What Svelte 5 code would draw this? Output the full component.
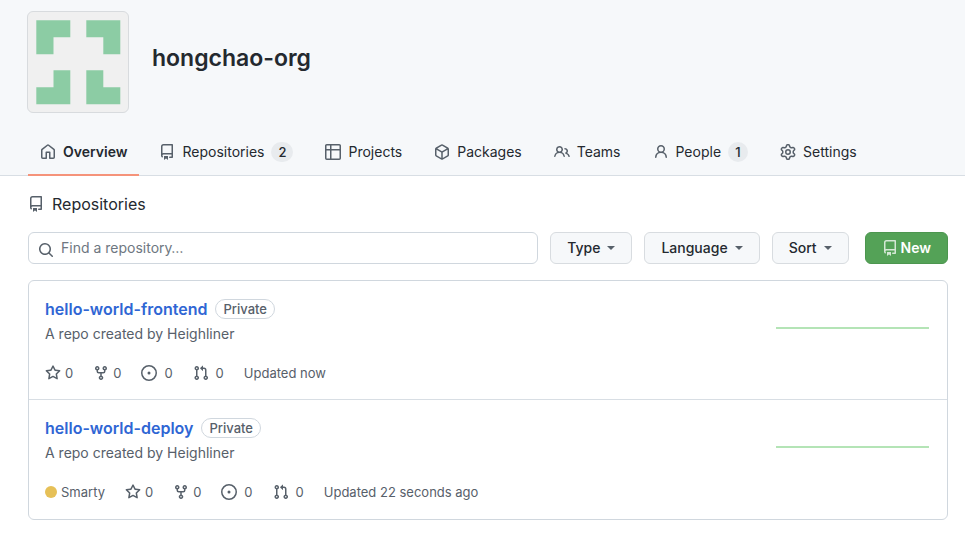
<script>
  const icons = {
    home: 'M8.156 1.835a.25.25 0 00-.312 0l-5.25 4.2a.25.25 0 00-.094.196v7.019c0 .138.112.25.25.25H5.5V8.25a.75.75 0 01.75-.75h3.5a.75.75 0 01.75.75v5.25h2.75a.25.25 0 00.25-.25V6.23a.25.25 0 00-.094-.195l-5.25-4.2zM6.906.664a1.75 1.75 0 012.187 0l5.25 4.2c.415.332.657.835.657 1.367v7.019A1.75 1.75 0 0113.25 15h-3.5a.75.75 0 01-.75-.75V9H7v5.25a.75.75 0 01-.75.75h-3.5A1.75 1.75 0 011 13.25V6.23c0-.531.242-1.034.657-1.366l5.25-4.2h-.001z',
    repo: 'M2 2.5A2.5 2.5 0 014.5 0h8.75a.75.75 0 01.75.75v12.5a.75.75 0 01-.75.75h-2.5a.75.75 0 110-1.5h1.75v-2h-8a1 1 0 00-.714 1.7.75.75 0 01-1.072 1.05A2.495 2.495 0 012 11.5v-9zm10.5-1V9h-8c-.356 0-.694.074-1 .208V2.5a1 1 0 011-1h8zM5 12.25v3.25a.25.25 0 00.4.2l1.45-1.087a.25.25 0 01.3 0L8.6 15.7a.25.25 0 00.4-.2v-3.25a.25.25 0 00-.25-.25h-3.5a.25.25 0 00-.25.25z',
    table: 'M0 1.75C0 .784.784 0 1.75 0h12.5C15.216 0 16 .784 16 1.75v12.5A1.75 1.75 0 0 1 14.25 16H1.75A1.75 1.75 0 0 1 0 14.25ZM6.5 6.5v8h7.75a.25.25 0 0 0 .25-.25V6.5Zm8-1.5V1.75a.25.25 0 0 0-.25-.25H6.5V5Zm-13 1.5v7.75c0 .138.112.25.25.25H5v-8ZM5 5V1.5H1.75a.25.25 0 0 0-.25.25V5Z',
    package: 'M8.878.392a1.75 1.75 0 00-1.756 0l-5.25 3.045A1.75 1.75 0 001 4.951v6.098c0 .624.332 1.2.872 1.514l5.25 3.045a1.75 1.75 0 001.756 0l5.25-3.045c.54-.313.872-.89.872-1.514V4.951c0-.624-.332-1.2-.872-1.514L8.878.392zM7.875 1.69a.25.25 0 01.25 0l4.63 2.685L8 7.133 3.245 4.375l4.63-2.685zM2.5 5.677v5.372c0 .09.047.171.125.216l4.625 2.683V8.432L2.5 5.677zm6.25 8.271l4.625-2.683a.25.25 0 00.125-.216V5.677L8.75 8.432v5.516z',
    people: 'M5.5 3.5a2 2 0 100 4 2 2 0 000-4zM2 5.5a3.5 3.5 0 115.898 2.549 5.507 5.507 0 013.034 4.084.75.75 0 11-1.482.235 4.001 4.001 0 00-7.9 0 .75.75 0 01-1.482-.236A5.507 5.507 0 013.102 8.05 3.49 3.49 0 012 5.5zM11 4a.75.75 0 100 1.5 1.5 1.5 0 01.666 2.844.75.75 0 00-.416.672v.352a.75.75 0 00.574.73c1.2.289 2.162 1.2 2.522 2.372a.75.75 0 101.434-.44 5.01 5.01 0 00-2.56-3.012A3 3 0 0011 4z',
    person: 'M10.5 5a2.5 2.5 0 11-5 0 2.5 2.5 0 015 0zm.061 3.073a4 4 0 10-5.123 0 6.004 6.004 0 00-3.431 5.142.75.75 0 001.498.07 4.5 4.5 0 018.99 0 .75.75 0 101.498-.07 6.005 6.005 0 00-3.432-5.142z',
    gear: 'M8 0a8.2 8.2 0 0 1 .701.031C9.444.095 9.99.645 10.16 1.29l.288 1.107c.018.066.079.158.212.224.231.114.454.243.668.386.123.082.233.09.299.071l1.103-.303c.644-.176 1.392.021 1.82.63.27.385.506.792.704 1.218.315.675.111 1.422-.364 1.891l-.814.806c-.049.048-.098.147-.088.294.016.257.016.515 0 .772-.01.147.038.246.088.294l.814.806c.475.469.679 1.216.364 1.891a7.977 7.977 0 0 1-.704 1.217c-.428.61-1.176.807-1.82.63l-1.102-.302c-.067-.019-.177-.011-.3.071a5.909 5.909 0 0 1-.668.386c-.133.066-.194.158-.211.224l-.29 1.106c-.168.646-.715 1.196-1.458 1.26a8.006 8.006 0 0 1-1.402 0c-.743-.064-1.289-.614-1.458-1.26l-.289-1.106c-.018-.066-.079-.158-.212-.224a5.738 5.738 0 0 1-.668-.386c-.123-.082-.233-.09-.299-.071l-1.103.303c-.644.176-1.392-.021-1.82-.63a8.12 8.12 0 0 1-.704-1.218c-.315-.675-.111-1.422.363-1.891l.815-.806c.05-.048.098-.147.088-.294a6.214 6.214 0 0 1 0-.772c.01-.147-.038-.246-.088-.294l-.815-.806C.635 6.045.431 5.298.746 4.623a7.92 7.92 0 0 1 .704-1.217c.428-.61 1.176-.807 1.82-.63l1.102.302c.067.019.177.011.3-.071.214-.143.437-.272.668-.386.133-.066.194-.158.211-.224l.29-1.106C6.009.645 6.556.095 7.299.03 7.53.01 7.764 0 8 0Zm-.571 1.525c-.036.003-.108.036-.137.146l-.289 1.105c-.147.561-.549.967-.998 1.189-.173.086-.34.183-.5.29-.417.278-.97.423-1.529.27l-1.103-.303c-.109-.03-.175.016-.195.045-.22.312-.412.644-.573.99-.014.031-.021.11.059.19l.815.806c.411.406.562.957.53 1.456a4.709 4.709 0 0 0 0 .582c.032.499-.119 1.05-.53 1.456l-.815.806c-.081.08-.073.159-.059.19.162.346.353.677.573.989.02.03.085.076.195.046l1.102-.303c.56-.153 1.113-.008 1.53.27.161.107.328.204.501.29.447.222.85.629.997 1.189l.289 1.105c.029.109.101.143.137.146a6.6 6.6 0 0 0 1.142 0c.036-.003.108-.036.137-.146l.289-1.105c.147-.561.549-.967.998-1.189.173-.086.34-.183.5-.29.417-.278.97-.423 1.529-.27l1.103.303c.109.029.175-.016.195-.045.22-.313.411-.644.573-.99.014-.031.021-.11-.059-.19l-.815-.806c-.411-.406-.562-.957-.53-1.456a4.709 4.709 0 0 0 0-.582c-.032-.499.119-1.05.53-1.456l.815-.806c.081-.08.073-.159.059-.19a6.464 6.464 0 0 0-.573-.989c-.02-.03-.085-.076-.195-.046l-1.102.303c-.56.153-1.113.008-1.53-.27a4.44 4.44 0 0 0-.501-.29c-.447-.222-.85-.629-.997-1.189l-.289-1.105c-.029-.11-.101-.143-.137-.146a6.6 6.6 0 0 0-1.142 0ZM11 8a3 3 0 1 1-6 0 3 3 0 0 1 6 0ZM9.5 8a1.5 1.5 0 1 0-3.001.001A1.5 1.5 0 0 0 9.5 8Z',
    star: 'M8 .25a.75.75 0 01.673.418l1.882 3.815 4.21.612a.75.75 0 01.416 1.279l-3.046 2.97.719 4.192a.75.75 0 01-1.088.791L8 12.347l-3.766 1.98a.75.75 0 01-1.088-.79l.72-4.194L.818 6.374a.75.75 0 01.416-1.28l4.21-.611L7.327.668A.75.75 0 018 .25zm0 2.445L6.615 5.5a.75.75 0 01-.564.41l-3.097.45 2.24 2.184a.75.75 0 01.216.664l-.528 3.084 2.769-1.456a.75.75 0 01.698 0l2.77 1.456-.53-3.084a.75.75 0 01.216-.664l2.24-2.183-3.096-.45a.75.75 0 01-.564-.41L8 2.694v.001z',
    fork: 'M5 3.25a.75.75 0 11-1.5 0 .75.75 0 011.5 0zm0 2.122a2.25 2.25 0 10-1.5 0v.878A2.25 2.25 0 005.75 8.5h1.5v2.128a2.251 2.251 0 101.5 0V8.5h1.5a2.25 2.25 0 002.25-2.25v-.878a2.25 2.25 0 10-1.5 0v.878a.75.75 0 01-.75.75h-4.5A.75.75 0 015 6.25v-.878zm3.75 7.378a.75.75 0 11-1.5 0 .75.75 0 011.5 0zm3-8.75a.75.75 0 100-1.5.75.75 0 000 1.5z',
    issue: 'M8 9.5a1.5 1.5 0 100-3 1.5 1.5 0 000 3zM8 0a8 8 0 100 16A8 8 0 008 0zM1.5 8a6.5 6.5 0 1113 0 6.5 6.5 0 01-13 0z',
    pull: 'M7.177 3.073L9.573.677A.25.25 0 0110 .854v4.792a.25.25 0 01-.427.177L7.177 3.427a.25.25 0 010-.354zM3.75 2.5a.75.75 0 100 1.5.75.75 0 000-1.5zm-2.25.75a2.25 2.25 0 113 2.122v5.256a2.251 2.251 0 11-1.5 0V5.372A2.25 2.25 0 011.5 3.25zM11 2.5h-1V4h1a1 1 0 011 1v5.628a2.251 2.251 0 101.5 0V5A2.5 2.5 0 0011 2.5zm1 10.25a.75.75 0 111.5 0 .75.75 0 01-1.5 0zM3.75 12a.75.75 0 100 1.5.75.75 0 000-1.5z',
    search: 'M11.5 7a4.499 4.499 0 11-8.998 0A4.499 4.499 0 0111.5 7zm-.82 4.74a6 6 0 111.06-1.06l3.04 3.04a.75.75 0 11-1.06 1.06l-3.04-3.04z'
  };

  const tabs = [
    { label: 'Overview', icon: 'home', active: true },
    { label: 'Repositories', icon: 'repo', count: 2 },
    { label: 'Projects', icon: 'table' },
    { label: 'Packages', icon: 'package' },
    { label: 'Teams', icon: 'people' },
    { label: 'People', icon: 'person', count: 1 },
    { label: 'Settings', icon: 'gear' }
  ];

  const filters = ['Type', 'Language', 'Sort'];

  const repos = [
    { name: 'hello-world-frontend', updated: 'now' },
    { name: 'hello-world-deploy', language: 'Smarty', updated: '22 seconds ago' }
  ];

  const stats = [
    { icon: 'star', label: 'stars' },
    { icon: 'fork', label: 'forks' },
    { icon: 'issue', label: 'open issues', wide: true },
    { icon: 'pull', label: 'pull requests', wide: true }
  ];

  let query = $state('');
</script>

{#snippet icon(name)}
  <svg class="icon" viewBox="0 0 16 16" width="16" height="16" aria-hidden="true">
    <path fill-rule="evenodd" d={icons[name]} />
  </svg>
{/snippet}

<div class="page">
  <header>
    <div class="org">
      <svg class="avatar" viewBox="0 0 100 100" aria-hidden="true">
        <path d="M8.3 8.3h34v17H25.5v17H8.3zM58.3 8.3h34v34h-17v-17h-17zM25.5 58.3h16.8v34h-34v-17h17.2zM58.3 58.3h17v17h17v17h-34z" />
      </svg>
      <h1>hongchao-org</h1>
    </div>
    <nav aria-label="Organization">
      {#each tabs as tab}
        <a href="#{tab.label.toLowerCase()}" class="tab" class:active={tab.active} aria-current={tab.active ? 'page' : undefined}>
          {@render icon(tab.icon)}
          <span>{tab.label}</span>
          {#if tab.count}<span class="counter">{tab.count}</span>{/if}
        </a>
      {/each}
    </nav>
  </header>

  <main>
    <h2>{@render icon('repo')}<span>Repositories</span></h2>

    <div class="toolbar">
      <div class="search">
        {@render icon('search')}
        <input type="search" aria-label="Find a repository" placeholder="Find a repository…" bind:value={query} />
      </div>
      <div class="filters">
        {#each filters as filter}
          <button type="button" class="btn" aria-haspopup="menu">{filter}<span class="caret"></span></button>
        {/each}
      </div>
      <button type="button" class="btn primary">{@render icon('repo')}New</button>
    </div>

    <ul class="repos">
      {#each repos as repo}
        <li>
          <div class="info">
            <div class="name">
              <h3><a href="#{repo.name}">{repo.name}</a></h3>
              <span class="badge">Private</span>
            </div>
            <p>A repo created by Heighliner</p>
            <div class="meta">
              {#if repo.language}
                <span class="language"><span class="dot"></span>{repo.language}</span>
              {/if}
              {#each stats as stat}
                <a href="#{repo.name}" class="stat" class:wide={stat.wide} aria-label="0 {stat.label}">{@render icon(stat.icon)}0</a>
              {/each}
              <span>Updated {repo.updated}</span>
            </div>
          </div>
          <svg class="activity" viewBox="0 0 153 2" aria-hidden="true"><rect width="153" height="2" /></svg>
        </li>
      {/each}
    </ul>
  </main>
</div>

<style>
  :global(body) {
    margin: 0;
    background: #fff;
  }
  .page {
    font-family: Inter, 'Liberation Sans', sans-serif;
    font-size: 14px;
    line-height: 20px;
    color: #24292f;
  }
  .page * {
    box-sizing: border-box;
  }
  h1, h2, h3, p, ul {
    margin: 0;
    padding: 0;
  }
  a {
    color: inherit;
    text-decoration: none;
  }
  button, input {
    font: inherit;
  }
  .icon {
    flex: none;
    fill: #57606a;
  }
  header {
    padding: 11px 17px 0 27px;
    background: #f6f8fa;
    border-bottom: 1px solid #d8dee4;
  }
  .org {
    display: flex;
    align-items: center;
    gap: 23px;
  }
  .avatar {
    width: 102px;
    height: 102px;
    border: 1px solid #d8dbde;
    border-radius: 6px;
    background: #f0f0f0;
    fill: #8ccca4;
  }
  h1 {
    padding-bottom: 8px;
    font-size: 23px;
    line-height: 30px;
    font-weight: 600;
  }
  nav {
    display: flex;
    gap: 8px;
    margin: 15px 0 -1px 1px;
  }
  .tab {
    display: flex;
    align-items: center;
    gap: 7px;
    height: 48px;
    padding: 2px 12px 0;
    border-bottom: 2px solid transparent;
  }
  .tab.active {
    border-color: #f5937a;
    font-weight: 600;
  }
  .counter {
    min-width: 20px;
    padding: 0 7px;
    border-radius: 10px;
    background: #e8ebee;
    font-size: 13px;
    font-weight: 500;
    text-align: center;
  }
  main {
    padding: 16px 17px 34px 28px;
  }
  h2 {
    display: flex;
    align-items: center;
    gap: 8px;
    font-size: 16px;
    line-height: 24px;
    font-weight: 400;
  }
  .toolbar {
    display: flex;
    gap: 16px;
    margin: 16px 0;
  }
  .search {
    display: flex;
    align-items: center;
    gap: 7px;
    flex: 1;
    height: 32px;
    margin-right: -4px;
    padding: 0 9px;
    border: 1px solid #d0d7de;
    border-radius: 6px;
  }
  .search .icon {
    margin-top: 3px;
  }
  .search input {
    flex: 1;
    min-width: 0;
    padding: 0;
    border: 0;
    outline: 0;
    background: none;
    color: #24292f;
  }
  .search input::placeholder {
    color: #6e7781;
    opacity: 1;
  }
  .filters {
    display: flex;
    gap: 12px;
  }
  .btn {
    display: flex;
    align-items: center;
    gap: 7px;
    height: 32px;
    padding: 0 16px;
    border: 1px solid #d8dce0;
    border-radius: 6px;
    background: #f6f8fa;
    color: #24292f;
    font-weight: 500;
  }
  .caret {
    border: 4px solid transparent;
    border-top-color: #57606a;
    border-bottom: 0;
  }
  .primary {
    gap: 3px;
    border-color: #4c964f;
    background: #54a257;
    color: #fff;
    font-weight: 600;
  }
  .primary .icon {
    fill: #d4e8d5;
  }
  .repos {
    list-style: none;
    border: 1px solid #d0d7de;
    border-radius: 6px;
  }
  li {
    display: flex;
    justify-content: space-between;
    padding: 16px 18px 16px 16px;
    border-bottom: 1px solid #d8dee4;
  }
  li:last-child {
    border-color: transparent;
  }
  .name {
    display: flex;
    align-items: center;
    gap: 8px;
  }
  h3 {
    font-size: 16px;
    line-height: 24px;
    font-weight: 600;
    color: #2f66d4;
  }
  .badge {
    padding: 0 7px;
    border: 1px solid #d0d7de;
    border-radius: 10px;
    color: #57606a;
    font-size: 13px;
    line-height: 18px;
    font-weight: 500;
  }
  p {
    margin: 3px 0 19px;
    color: #57606a;
  }
  .meta {
    display: flex;
    gap: 20px;
    color: #57606a;
    font-size: 13px;
  }
  .language, .stat {
    display: flex;
    align-items: center;
    gap: 4px;
  }
  .stat.wide {
    gap: 7px;
  }
  .dot {
    width: 12px;
    height: 12px;
    border-radius: 50%;
    background: #e6c057;
  }
  .activity {
    width: 153px;
    height: 2px;
    margin-top: 30px;
    fill: #b4e4b6;
  }
</style>
